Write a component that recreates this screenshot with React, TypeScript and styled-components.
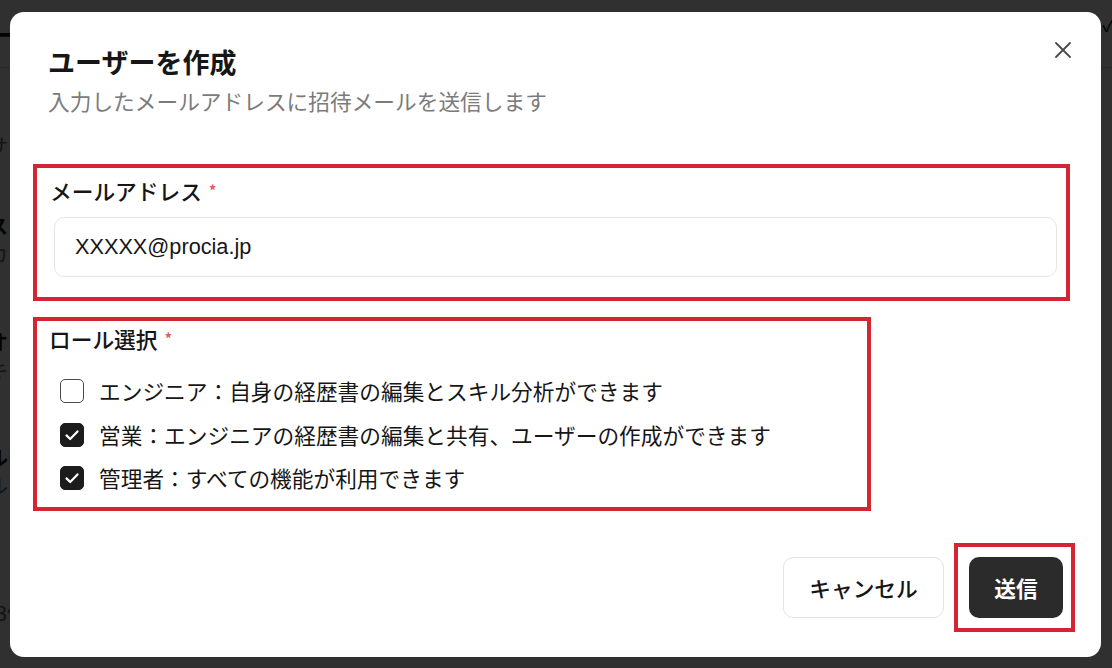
import styled, { createGlobalStyle } from "styled-components";

const GlobalStyle = createGlobalStyle`
  html, body {
    margin: 0;
    padding: 0;
  }
  body {
    width: 1112px;
    height: 668px;
    overflow: hidden;
    font-family: "Noto Sans CJK JP", "Liberation Sans", sans-serif;
    color: #1a1a1a;
  }
  * {
    box-sizing: border-box;
  }
`;

const roles = [
  { id: "engineer", label: "エンジニア：自身の経歴書の編集とスキル分析ができます", checked: false },
  { id: "sales", label: "営業：エンジニアの経歴書の編集と共有、ユーザーの作成ができます", checked: true },
  { id: "admin", label: "管理者：すべての機能が利用できます", checked: true },
];

const backgroundRows = [
  { text: "サービス一覧", top: 64, strong: false },
  { text: "スキル分析", top: 52, strong: true },
  { text: "カテゴリ", top: 0, strong: false },
  { text: "オプション", top: 60, strong: true },
  { text: "キャリア", top: 0, strong: false },
  { text: "ルール", top: 60, strong: true },
  { text: "ルート", top: 0, strong: false },
];

const RoleCheckbox = ({ checked }: { checked: boolean }) => (
  <CheckBox $checked={checked}>
    {checked && (
      <svg width="16" height="16" viewBox="0 0 16 16" fill="none">
        <path d="M2.5 8.4 L6.2 12 L13.5 4.4" stroke="#fff" strokeWidth="2.2" strokeLinecap="round" strokeLinejoin="round" />
      </svg>
    )}
  </CheckBox>
);

const App = () => {
  return (
    <>
      <GlobalStyle />
      <Page>
        <PageHeader>
          <PageTitle>ーザー管理</PageTitle>
          <HeaderIcon>✓</HeaderIcon>
        </PageHeader>
        {backgroundRows.map((row) => (
          <PageRow key={row.text} $top={row.top} $strong={row.strong}>
            {row.text}
          </PageRow>
        ))}
        <PageFooter>3件</PageFooter>
      </Page>

      <Overlay>
        <Modal role="dialog" aria-labelledby="create-user-title">
          <Header>
            <Title id="create-user-title">ユーザーを作成</Title>
            <CloseButton aria-label="閉じる">
              <svg width="16" height="16" viewBox="0 0 16 16" fill="none">
                <path d="M1 1 L15 15 M15 1 L1 15" stroke="#4a4a4a" strokeWidth="1.8" strokeLinecap="round" />
              </svg>
            </CloseButton>
          </Header>
          <Description>入力したメールアドレスに招待メールを送信します</Description>

          <EmailSection>
            <FieldLabel htmlFor="email">
              メールアドレス<Required>*</Required>
            </FieldLabel>
            <EmailInput id="email" type="email" defaultValue="XXXXX@procia.jp" />
          </EmailSection>

          <RoleSection>
            <FieldLabel as="div">
              ロール選択<Required>*</Required>
            </FieldLabel>
            <RoleList>
              {roles.map((role) => (
                <RoleOption key={role.id}>
                  <RoleCheckbox checked={role.checked} />
                  <span>{role.label}</span>
                </RoleOption>
              ))}
            </RoleList>
          </RoleSection>

          <Footer>
            <CancelButton>キャンセル</CancelButton>
            <SendHighlight>
              <SendButton>送信</SendButton>
            </SendHighlight>
          </Footer>
        </Modal>
      </Overlay>
    </>
  );
};

const Page = styled.div`
  width: 1112px;
  height: 668px;
  background: #ffffff;
  display: flex;
  flex-direction: column;
`;

const PageHeader = styled.div`
  height: 68px;
  display: flex;
  justify-content: space-between;
  align-items: center;
  border-bottom: 1px solid #d8d8d8;
`;

const PageTitle = styled.div`
  margin-left: -12px;
  font-size: 26px;
  line-height: 36px;
  font-weight: 700;
  color: #111;
`;

const HeaderIcon = styled.div`
  margin-right: -4px;
  margin-bottom: 20px;
  font-size: 20px;
  line-height: 24px;
  color: #111;
`;

const PageRow = styled.div<{ $top: number; $strong: boolean }>`
  margin-top: ${(p) => p.$top}px;
  margin-left: -12px;
  font-size: 20px;
  line-height: 28px;
  font-weight: ${(p) => (p.$strong ? 700 : 400)};
  color: ${(p) => (p.$strong ? "#111" : "#666")};
`;

const PageFooter = styled.div`
  margin-top: 98px;
  margin-left: -4px;
  font-size: 20px;
  color: #666;
`;

const Overlay = styled.div`
  position: fixed;
  inset: 0;
  background: rgba(0, 0, 0, 0.81);
  display: flex;
  align-items: flex-start;
  padding: 12px 0 0 10px;
`;

const Modal = styled.div`
  width: 1091px;
  background: #ffffff;
  border-radius: 14px;
  padding: 32px 38px 25px 38px;
  display: flex;
  flex-direction: column;
`;

const Header = styled.div`
  display: flex;
  justify-content: space-between;
  align-items: flex-start;
`;

const Title = styled.h2`
  margin: 0;
  font-size: 27px;
  line-height: 36px;
  font-weight: 700;
  color: #161616;
`;

const CloseButton = styled.button`
  width: 32px;
  height: 32px;
  margin: -10px -16px 0 0;
  border: none;
  background: transparent;
  display: flex;
  align-items: center;
  justify-content: center;
  padding: 0;
  cursor: pointer;
`;

const Description = styled.p`
  margin: 6px 0 0;
  font-size: 21.7px;
  line-height: 30px;
  color: #7b7b7b;
`;

const Highlight = styled.div`
  border: 4px solid #d32632;
`;

const EmailSection = styled(Highlight)`
  margin: 48px -7px 0 -15px;
  padding: 7px 9px 20px 13px;
  display: flex;
  flex-direction: column;
  gap: 11px;
`;

const FieldLabel = styled.label`
  display: block;
  font-size: 21.7px;
  line-height: 30px;
  font-weight: 500;
  color: #161616;
`;

const Required = styled.span`
  margin-left: 7px;
  font-size: 16px;
  color: #e0575b;
  vertical-align: 3px;
`;

const EmailInput = styled.input`
  margin-left: 4px;
  height: 60px;
  border: 1px solid #e6e6e6;
  border-radius: 10px;
  padding: 0 20px;
  font-family: "Liberation Sans", Arial, sans-serif;
  font-size: 21.7px;
  color: #161616;
  background: #ffffff;
  outline: none;
`;

const RoleSection = styled(Highlight)`
  margin: 16px 0 0 -15px;
  width: 838px;
  padding: 2px 0 14px 12px;
`;

const RoleList = styled.div`
  margin-top: 22px;
  padding-left: 11px;
  display: flex;
  flex-direction: column;
  gap: 13.5px;
`;

const RoleOption = styled.label`
  display: flex;
  align-items: center;
  gap: 15px;
  height: 30px;
  font-size: 21.7px;
  line-height: 30px;
  color: #161616;
  cursor: pointer;
`;

const CheckBox = styled.span<{ $checked: boolean }>`
  width: 24px;
  height: 24px;
  flex: none;
  border-radius: 5px;
  display: flex;
  align-items: center;
  justify-content: center;
  background: ${(p) => (p.$checked ? "#1c1c1c" : "#ffffff")};
  border: 1.5px solid ${(p) => (p.$checked ? "#1c1c1c" : "#4a4a4a")};
`;

const Footer = styled.div`
  margin: 32px -12px 0 0;
  display: flex;
  justify-content: flex-end;
  align-items: center;
  gap: 10px;
`;

const BaseButton = styled.button`
  height: 61px;
  border-radius: 10px;
  font-family: "Noto Sans CJK JP", sans-serif;
  font-size: 21.7px;
  cursor: pointer;
  padding: 0;
`;

const CancelButton = styled(BaseButton)`
  width: 161px;
  border: 1px solid #e3e3e3;
  background: #ffffff;
  color: #161616;
  font-weight: 500;
`;

const SendHighlight = styled(Highlight)`
  padding: 10px 8px 10px 11px;
`;

const SendButton = styled(BaseButton)`
  display: block;
  width: 94px;
  border: none;
  background: #2b2b2b;
  color: #ffffff;
  font-weight: 700;
`;

export default App;
